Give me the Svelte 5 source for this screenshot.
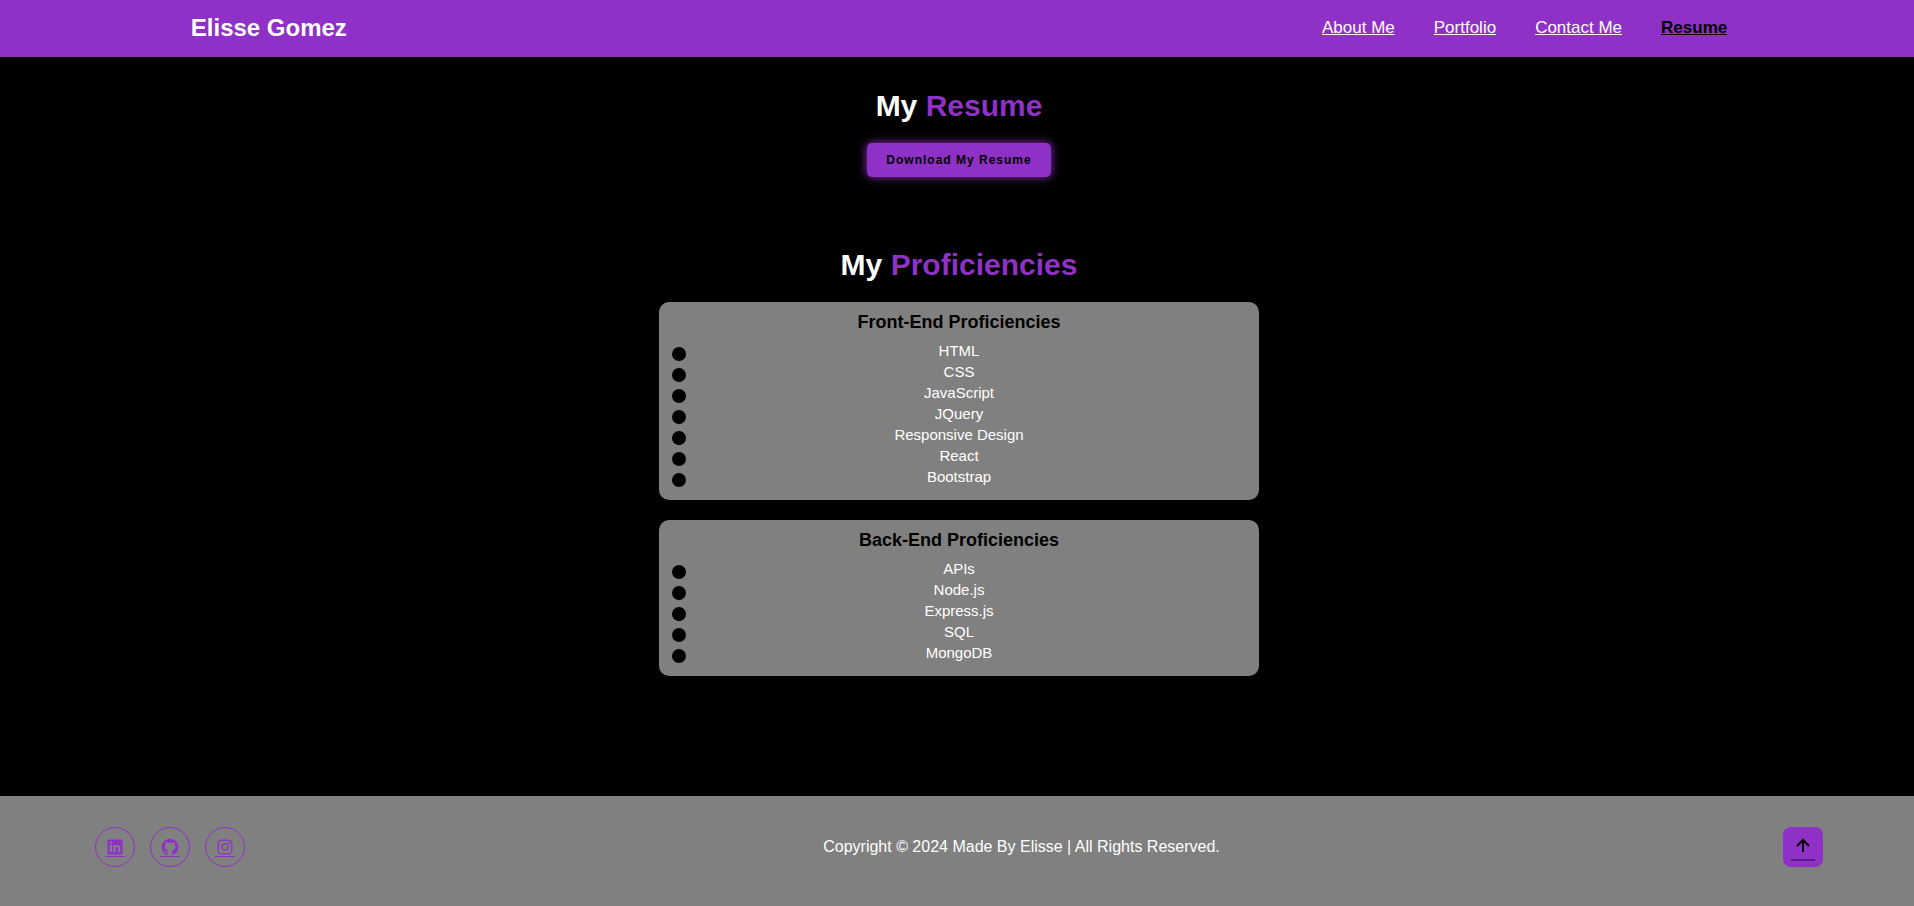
<script>
  const links = [
    { label: 'About Me', href: '#about' },
    { label: 'Portfolio', href: '#portfolio' },
    { label: 'Contact Me', href: '#contact' },
    { label: 'Resume', href: '#resume', active: true }
  ];

  const groups = [
    {
      title: 'Front-End Proficiencies',
      items: ['HTML', 'CSS', 'JavaScript', 'JQuery', 'Responsive Design', 'React', 'Bootstrap']
    },
    {
      title: 'Back-End Proficiencies',
      items: ['APIs', 'Node.js', 'Express.js', 'SQL', 'MongoDB']
    }
  ];
</script>

<div class="page">
  <header>
    <h1>Elisse Gomez</h1>
    <nav>
      {#each links as link}
        <a href={link.href} class:active={link.active}>{link.label}</a>
      {/each}
    </nav>
  </header>

  <main>
    <section class="resume">
      <h2>My <span>Resume</span></h2>
      <button type="button" class="download">Download My Resume</button>
    </section>

    <section class="skills">
      <h2>My <span>Proficiencies</span></h2>
      <div class="cards">
        {#each groups as group}
          <article class="card">
            <h3>{group.title}</h3>
            <ul>
              {#each group.items as item}
                <li><span class="dot"></span><span>{item}</span></li>
              {/each}
            </ul>
          </article>
        {/each}
      </div>
    </section>
  </main>

  <footer>
    <div class="social">
      <a href="#linkedin" aria-label="LinkedIn">
        <svg viewBox="0 0 24 24" width="20" height="20" fill="currentColor">
          <path d="M20 3H4a1 1 0 0 0-1 1v16a1 1 0 0 0 1 1h16a1 1 0 0 0 1-1V4a1 1 0 0 0-1-1zM8.339 18.337H5.667v-8.59h2.672v8.59zM7.003 8.574a1.548 1.548 0 1 1 0-3.096 1.548 1.548 0 0 1 0 3.096zm11.335 9.763h-2.669V14.16c0-.996-.018-2.277-1.388-2.277-1.39 0-1.601 1.086-1.601 2.207v4.248h-2.667v-8.59h2.56v1.174h.037c.355-.675 1.227-1.387 2.524-1.387 2.704 0 3.203 1.778 3.203 4.092v4.71z" />
          <rect x="0" y="22.8" width="24" height="1.2" />
        </svg>
      </a>
      <a href="#github" aria-label="GitHub">
        <svg viewBox="0 0 24 24" width="20" height="20" fill="currentColor">
          <path d="M12.026 2c-5.509 0-9.974 4.465-9.974 9.974 0 4.406 2.857 8.145 6.821 9.465.499.09.679-.217.679-.481 0-.237-.008-.865-.011-1.696-2.775.602-3.361-1.338-3.361-1.338-.452-1.152-1.107-1.459-1.107-1.459-.905-.619.069-.605.069-.605 1.002.07 1.527 1.028 1.527 1.028.89 1.524 2.336 1.084 2.902.829.091-.645.351-1.085.635-1.334-2.214-.251-4.542-1.107-4.542-4.93 0-1.087.389-1.979 1.024-2.675-.101-.253-.446-1.268.099-2.64 0 0 .837-.269 2.742 1.021a9.582 9.582 0 0 1 2.496-.336 9.554 9.554 0 0 1 2.496.336c1.906-1.291 2.742-1.021 2.742-1.021.545 1.372.203 2.387.099 2.64.64.696 1.024 1.587 1.024 2.675 0 3.833-2.33 4.675-4.552 4.922.355.308.675.916.675 1.846 0 1.334-.012 2.41-.012 2.737 0 .267.178.577.687.479C19.146 20.115 22 16.379 22 11.974 22 6.465 17.535 2 12.026 2z" />
          <rect x="0" y="22.8" width="24" height="1.2" />
        </svg>
      </a>
      <a href="#instagram" aria-label="Instagram">
        <svg viewBox="0 0 24 24" width="20" height="20" fill="currentColor">
          <rect x="3.8" y="3.8" width="16.4" height="16.4" rx="4.4" fill="none" stroke="currentColor" stroke-width="1.6" />
          <circle cx="12" cy="12" r="3.8" fill="none" stroke="currentColor" stroke-width="1.6" />
          <circle cx="16.8" cy="7.2" r="1.08" />
          <rect x="0" y="22.8" width="24" height="1.2" />
        </svg>
      </a>
    </div>
    <p>Copyright © 2024 Made By Elisse | All Rights Reserved.</p>
    <a class="top" href="#top" aria-label="Back to top">
      <svg viewBox="0 -1 24 28" width="24" height="28">
        <path d="M11 8.414V18h2V8.414l4.293 4.293 1.414-1.414L12 4.586l-6.707 6.707 1.414 1.414z" fill="#000" />
        <rect x="0" y="25" width="24" height="2" fill="#5a1a8c" />
      </svg>
    </a>
  </footer>
</div>

<style>
  :global(body) {
    margin: 0;
    background: #000;
    overflow-x: hidden;
  }

  .page {
    --accent: #8f30c6;
    --panel: #808080;
    display: flex;
    flex-direction: column;
    min-height: 100vh;
    margin-right: -4px;
    background: #000;
    color: #fff;
    font-family: 'Liberation Sans', Arial, sans-serif;
  }

  h1, h2, h3, p, ul {
    margin: 0;
    padding: 0;
  }

  header {
    display: flex;
    align-items: center;
    justify-content: space-between;
    padding: 14px calc(10% - 1px) 15px;
    background: var(--accent);
  }

  h1 {
    font-size: 24px;
    line-height: 28px;
  }

  nav {
    display: flex;
    gap: 39px;
    font-size: 17px;
    line-height: 20px;
  }

  nav a {
    color: #fff;
  }

  nav a.active {
    color: #000;
    font-weight: 700;
  }

  main {
    flex: 1;
    padding: 31px 20px 120px;
  }

  section {
    display: flex;
    flex-direction: column;
    align-items: center;
    gap: 19px;
  }

  .skills {
    margin-top: 70px;
  }

  h2 {
    font-size: 30px;
    line-height: 36px;
  }

  h2 span {
    color: var(--accent);
  }

  .download {
    padding: 10px 19px;
    border: 0;
    border-radius: 5px;
    background: var(--accent);
    box-shadow: 0 0 10px var(--accent);
    color: #000;
    font: 700 12px/14px 'Liberation Sans', Arial, sans-serif;
    letter-spacing: 1px;
  }

  .cards {
    display: flex;
    flex-direction: column;
    gap: 20px;
    width: 100%;
    max-width: 600px;
  }

  .card {
    padding: 10px 13px 12px;
    border-radius: 10px;
    background: var(--panel);
    text-align: center;
  }

  h3 {
    margin-bottom: 8px;
    color: #000;
    font-size: 18px;
    line-height: 21px;
  }

  ul {
    list-style: none;
    font-size: 15px;
    line-height: 19px;
  }

  li {
    display: grid;
    grid-template-columns: 14px 1fr 14px;
    height: 21px;
  }

  .dot {
    width: 14px;
    height: 14px;
    margin-top: 6px;
    border-radius: 50%;
    background: #000;
  }

  footer {
    display: flex;
    align-items: center;
    justify-content: space-between;
    padding: 31px calc(5% - 1px) 39px;
    background: var(--panel);
    font-size: 16px;
  }

  .social {
    display: flex;
    gap: 15px;
    padding-right: 15px;
  }

  .social a {
    display: flex;
    align-items: center;
    justify-content: center;
    box-sizing: border-box;
    width: 40px;
    height: 40px;
    border: 1px solid var(--accent);
    border-radius: 50%;
    color: var(--accent);
  }

  .top {
    display: flex;
    align-items: center;
    justify-content: center;
    width: 40px;
    height: 40px;
    border-radius: 8px;
    background: var(--accent);
  }
</style>
